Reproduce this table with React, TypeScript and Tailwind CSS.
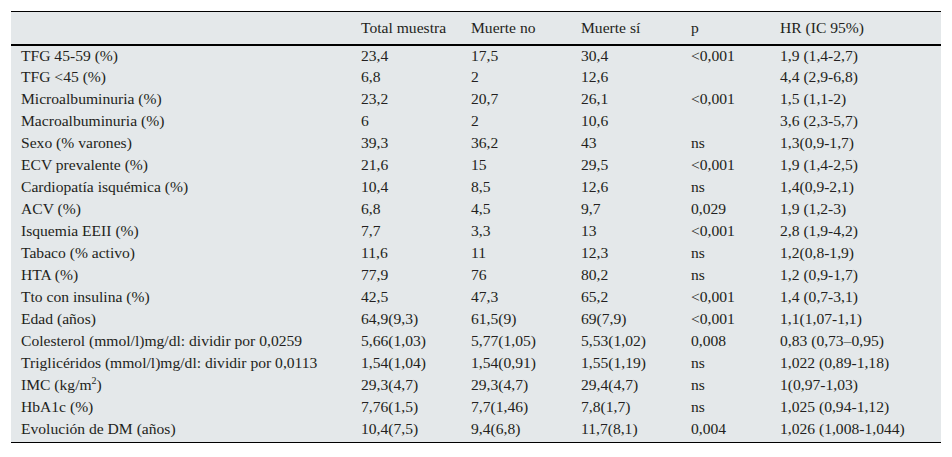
const ROWS: [React.ReactNode, string, string, string, string, string][] = [
  ['TFG 45-59 (%)', '23,4', '17,5', '30,4', '<0,001', '1,9 (1,4-2,7)'],
  ['TFG <45 (%)', '6,8', '2', '12,6', '', '4,4 (2,9-6,8)'],
  ['Microalbuminuria (%)', '23,2', '20,7', '26,1', '<0,001', '1,5 (1,1-2)'],
  ['Macroalbuminuria (%)', '6', '2', '10,6', '', '3,6 (2,3-5,7)'],
  ['Sexo (% varones)', '39,3', '36,2', '43', 'ns', '1,3(0,9-1,7)'],
  ['ECV prevalente (%)', '21,6', '15', '29,5', '<0,001', '1,9 (1,4-2,5)'],
  ['Cardiopatía isquémica (%)', '10,4', '8,5', '12,6', 'ns', '1,4(0,9-2,1)'],
  ['ACV (%)', '6,8', '4,5', '9,7', '0,029', '1,9 (1,2-3)'],
  ['Isquemia EEII (%)', '7,7', '3,3', '13', '<0,001', '2,8 (1,9-4,2)'],
  ['Tabaco (% activo)', '11,6', '11', '12,3', 'ns', '1,2(0,8-1,9)'],
  ['HTA (%)', '77,9', '76', '80,2', 'ns', '1,2 (0,9-1,7)'],
  ['Tto con insulina (%)', '42,5', '47,3', '65,2', '<0,001', '1,4 (0,7-3,1)'],
  ['Edad (años)', '64,9(9,3)', '61,5(9)', '69(7,9)', '<0,001', '1,1(1,07-1,1)'],
  ['Colesterol (mmol/l)mg/dl: dividir por 0,0259', '5,66(1,03)', '5,77(1,05)', '5,53(1,02)', '0,008', '0,83 (0,73\u20130,95)'],
  ['Triglicéridos (mmol/l)mg/dl: dividir por 0,0113', '1,54(1,04)', '1,54(0,91)', '1,55(1,19)', 'ns', '1,022 (0,89-1,18)'],
  [<>IMC (kg/m<sup className="text-[10px] relative -top-[6px]">2</sup>)</>, '29,3(4,7)', '29,3(4,7)', '29,4(4,7)', 'ns', '1(0,97-1,03)'],
  ['HbA1c (%)', '7,76(1,5)', '7,7(1,46)', '7,8(1,7)', 'ns', '1,025 (0,94-1,12)'],
  ['Evolución de DM (años)', '10,4(7,5)', '9,4(6,8)', '11,7(8,1)', '0,004', '1,026 (1,008-1,044)'],
];

const HEAD = ['', 'Total muestra', 'Muerte no', 'Muerte sí', 'p', 'HR (IC 95%)'];
const WIDTHS = ['w-[340px]', 'w-[110px]', 'w-[110px]', 'w-[110px]', 'w-[89px]', 'w-[171px]'];

export default function App() {
  return (
    <div className="w-[952px] h-[457px] bg-white pt-[11px] pl-[11px]" style={{ fontFamily: '"Liberation Serif", "Times New Roman", serif' }}>
      <table className="w-[930px] table-fixed border-collapse bg-[#e4e8ea] text-[15.6px] text-[#231f20]">
        <thead>
          <tr className="h-[33px] border-t border-black border-b-2">
            {HEAD.map((h, i) => (
              <th key={i} className={`${WIDTHS[i]} pl-[10px] text-left font-normal`}>
                {h}
              </th>
            ))}
          </tr>
        </thead>
        <tbody className="border-b border-black">
          {ROWS.map((r, ri) => (
            <tr key={ri} className={ri === ROWS.length - 1 ? 'h-[24px]' : 'h-[22px]'}>
              {r.map((c, ci) => (
                <td key={ci} className={`pl-[10px] leading-none whitespace-nowrap ${ri === ROWS.length - 1 ? 'pb-[3px]' : 'pb-[1px]'}`}>
                  {c}
                </td>
              ))}
            </tr>
          ))}
        </tbody>
      </table>
    </div>
  );
}
